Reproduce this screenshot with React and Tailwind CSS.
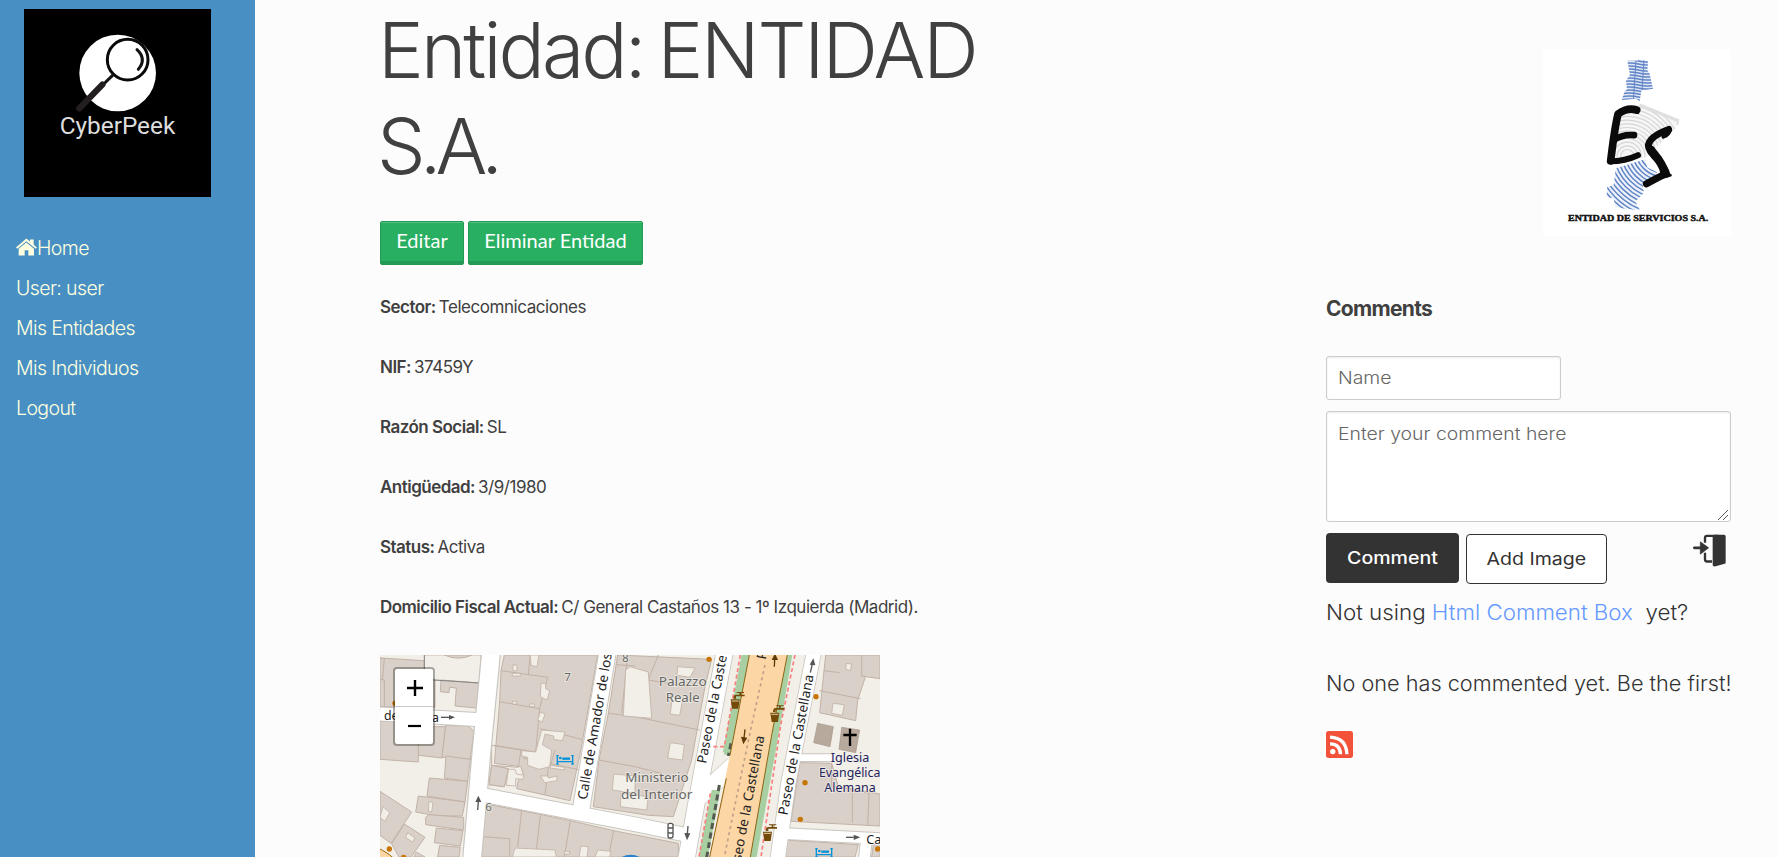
const details = [
  ["Sector:", "Telecomnicaciones"],
  ["NIF:", "37459Y"],
  ["Razón Social:", "SL"],
  ["Antigüedad:", "3/9/1980"],
  ["Status:", "Activa"],
  ["Domicilio Fiscal Actual:", "C/ General Castaños 13 - 1º Izquierda (Madrid)."],
];

function BrandLogo() {
  return (
    <svg viewBox="72 27 561 564" preserveAspectRatio="none" className="block h-[188px] w-[187px]">
      <rect x="72" y="27" width="561" height="564" fill="#000" />
      <circle cx="353" cy="219" r="115" fill="#fff" />
      <circle cx="383" cy="179" r="61" fill="#fff" stroke="#0a0809" strokeWidth="9" />
      <path d="M411 149Q441 177 415 208" fill="none" stroke="#151213" strokeWidth="9" strokeLinecap="round" />
      <path d="M340 224L305 258" stroke="#151213" strokeWidth="9" />
      <path d="M307 254L238 325" stroke="#231f20" strokeWidth="19" strokeLinecap="round" />
      <text x="179" y="402" textLength="347" lengthAdjust="spacingAndGlyphs" fontSize="73" fontFamily="Roboto, sans-serif" fontWeight="400" fill="#dedede">CyberPeek</text>
    </svg>
  );
}

function EntityLogo() {
  return (
    <svg viewBox="39 27 564 560" preserveAspectRatio="none" className="block h-[187px] w-[188px]">
      <defs>
        <clipPath id="north"><path d="M292 62H322L326 58L354 64L352 92L358 98L369 146L334 152L329 183L318 176L275 180L284 154L291 148L288 122L300 104Z" /></clipPath>
        <clipPath id="south"><path d="M258 384L345 357L352 382L381 396L378 412L338 432L341 458L316 484L330 510L256 502L251 475L229 470L232 440L251 434Z" /></clipPath>
        <clipPath id="middle"><path d="M330 190L448 238L445 256L350 350L340 354L246 362L255 215Z" /></clipPath>
      </defs>
      <rect x="39" y="27" width="564" height="560" fill="#fff" />
      <g clipPath="url(#north)">
        <rect x="270" y="50" width="110" height="140" fill="#dfe7f5" />
        <g fill="none" stroke="#6285c6" strokeWidth="4.5">
          {[60, 69, 78, 87, 96, 105, 114, 123, 132, 141, 150, 159, 168, 177].map((y) => (
            <path key={y} d={`M270 ${y + 3}Q300 ${y - 3} 325 ${y + 3}T380 ${y + 2}`} />
          ))}
          <path d="M318 60L310 182M342 60L336 150" strokeWidth="3" />
        </g>
      </g>
      <g clipPath="url(#middle)" fill="none" stroke="#d6d6d6" strokeWidth="3.5">
        <path d="M330 190L448 238L445 256L350 350L246 358L255 215Z" fill="#f6f6f6" stroke="none" />
        {[20, 31, 42, 53, 64, 75, 86, 97, 108, 119, 130, 141, 152, 163].map((r) => (
          <circle key={r} cx="292" cy="348" r={r} />
        ))}
        <path d="M330 192L448 240V254" stroke="#dfdfdf" strokeWidth="16" />
      </g>
      <g clipPath="url(#south)">
        <rect x="220" y="350" width="170" height="170" fill="#eef3fb" />
        <g fill="none" stroke="#6285c6" strokeWidth="4.5">
          {[40, 51, 62, 73, 84, 95, 106, 117, 128, 139, 150, 161, 172, 183, 194, 205, 216].map((r) => (
            <circle key={r} cx="400" cy="325" r={r} />
          ))}
        </g>
      </g>
      <g fill="none" stroke="#0b0b0b" strokeLinecap="round" strokeLinejoin="round">
        <path d="M320 210C300 203 280 210 264 222C254 262 248 314 242 362" strokeWidth="23" />
        <path d="M250 300C270 287 292 283 312 285" strokeWidth="20" />
        <path d="M241 363C268 363 300 356 324 345" strokeWidth="18" />
        <path d="M416 268C388 278 358 294 355 316C355 340 402 366 410 402C394 404 370 420 349 431" strokeWidth="21" />
        <path d="M362 328C376 348 398 366 403 396" strokeWidth="25" />
        <path d="M420 268Q418 284 400 290" strokeWidth="11" />
        <path d="M404 404L421 405" strokeWidth="9" />
      </g>
      <text x="114" y="541" textLength="421" lengthAdjust="spacingAndGlyphs" fontSize="25" fontWeight="700" fontFamily="'Liberation Serif', serif" fill="#111" stroke="#111" strokeWidth="1.2">ENTIDAD DE SERVICIOS S.A.</text>
    </svg>
  );
}

function HomeIcon() {
  return (
    <svg viewBox="50 53 63 53" className="mt-[-4px] h-[18px] w-[21px]" fill="#ffffe0">
      <path d="M81 54L92 63V57H103V73L113 81L109 85L81 62L54 85L50 81Z" />
      <path d="M81 66L104 85V105H87V89H76V105H58V85Z" />
    </svg>
  );
}

const labelHalo = { paintOrder: "stroke" };

function StreetLabel({ x, y, angle, length, children }) {
  return (
    <text transform={`translate(${x} ${y}) rotate(${angle})`} textLength={length} lengthAdjust="spacingAndGlyphs" fontSize="40" fill="#222" stroke="#fff" strokeWidth="5" style={labelHalo}>
      {children}
    </text>
  );
}

function PlaceLabel({ x, y, length, size = 39, fill = "#666", children }) {
  return (
    <text x={x} y={y} textAnchor="middle" textLength={length} lengthAdjust="spacingAndGlyphs" fontSize={size} fill={fill} stroke="#f2efe9" strokeOpacity=".8" strokeWidth="5" style={labelHalo}>
      {children}
    </text>
  );
}

function Tap({ x, y }) {
  return (
    <g transform={`translate(${x} ${y})`} fill="#734a08">
      <path d="M2 22H29L25 50H6Z" />
      <path d="M10 20Q10 8 18 8H44V13H18V20ZM28 8V3H20V0H42V3H33V8Z" />
      <path d="M5 27H26" stroke="#e0cda8" strokeWidth="3" />
    </g>
  );
}

function Bed({ x, y }) {
  return (
    <g transform={`translate(${x} ${y})`} fill="none" stroke="#0092da" strokeWidth="4">
      <path d="M3 0V28M49 0V28M0 2H7M45 2H52M0 27H7M45 27H52M3 20H49" />
      <path d="M18 11H41" strokeWidth="7" />
      <circle cx="12" cy="9" r="2" />
    </g>
  );
}

function StreetMap() {
  return (
    <svg viewBox="15 15 1500 606" preserveAspectRatio="none" className="block h-[202px] w-[500px]" fontFamily="'Noto Sans', 'Open Sans', sans-serif">
      <rect x="15" y="15" width="1500" height="606" fill="#f2efe9" />

      {/* buildings */}
      <g fill="#d9d0c9" stroke="#c2b2a6" strokeWidth="3" strokeLinejoin="round">
        <path d="M15 24L148 32V88L180 90V172L15 170Z" />
        <path d="M15 88L28 90V170M15 24L28 26L22 90" fill="none" />
        <path d="M130 230H212L201 324L130 316Z" />
        <path d="M15 213L130 218V336L15 328Z" />
        <path d="M212 227H278L297 244L286 328L201 322Z" />
        <path d="M213 318L286 328L278 394L208 384Z" />
        <path d="M163 384L278 394L270 456L156 438Z" />
        <path d="M130 438L270 456L262 498L186 498L122 486Z" />
        <path d="M162 494L266 502V540L152 524V502Z" />
        <path d="M184 534L264 542L256 588L178 578Z" />
        <path d="M194 586L256 592L252 621H188Z" />
        <path d="M15 424L110 486L48 580L15 556Z" />
        <path d="M88 522L150 562L108 621H72L50 582Z" />
        <path d="M124 606L150 621H116Z" />
        <path d="M388 15H668L616 308L585 452L425 416L430 390L446 378L438 350L358 340L374 155L378 62Z" />
        <path d="M378 62L518 82L494 176L372 155M494 176L482 306L358 286M466 15L460 72M350 286L438 300L430 352L350 346Z M350 346L400 356L388 410L342 404Z M444 324L616 360M540 300L526 350M520 352L510 434M496 236L620 268" fill="none" />
        <path d="M350 346L400 356L388 410L342 404Z" />
        <path d="M728 15L1010 28L990 110L950 330L895 500L820 496L655 470L672 330L700 190Z" />
        <path d="M724 44L780 48M700 190L780 200L974 240M672 330L780 350L860 370M758 15L740 190M850 15L820 90L940 110" fill="none" />
        <path d="M330 462L440 482L586 512L716 542L910 580V621H312Z" />
        <path d="M440 482L428 590M496 496L484 600M586 512L568 621M716 542L700 621M324 560L404 566V621" fill="none" />
        <path d="M1352 15H1460L1470 85L1448 150L1442 212L1334 188Z" />
        <path d="M1346 62L1394 68M1334 122L1456 146M1460 15V78L1515 86V15Z" />
        <path d="M1275 338L1370 340L1390 410L1515 432V528L1248 514Z" />
        <path d="M1370 340V410L1436 418L1482 430L1478 526M1432 418V518" fill="none" />
        <path d="M1230 570L1450 584L1440 621H1220Z M1495 584H1515V621H1490Z" />
      </g>
      <g fill="#b8a99d" stroke="#a59588" strokeWidth="2">
        <path d="M1328 220L1375 230L1365 290L1316 278Z" />
        <path d="M1400 232L1454 240L1442 308L1392 298Z" />
      </g>

      {/* courtyards */}
      <g fill="#f2efe9" stroke="#c2b2a6" strokeWidth="2.5">
        <path d="M466 15H492L486 50L468 46Z M414 44L426 46V62H414Z M498 100H512V116L524 122L516 150L496 140Z M496 186L510 192L502 216L488 210Z" />
        <path d="M500 240L570 246L562 272L536 268V258L510 252L502 284L530 300L524 350L492 358L458 346V322L440 318V302L482 306Z" />
        <path d="M400 358H420L424 372L448 376L442 388L422 386V408L394 406Z M496 378H520V384L546 378V392L510 398Z M526 346L568 352V360L526 354Z" />
        <path d="M148 15H318L313 99L180 90L148 88Z" />
        <path d="M412 70H436V78H412Z M412 154H426V162H412Z M464 162H478V170H464Z" />
        <path d="M24 470L44 488L30 514L15 502Z M98 548L120 564L112 576L92 562Z M162 454L174 458L170 486L160 484Z" />
        <path d="M716 372L780 378V430L712 420Z" />
        <path d="M765 50L820 66L830 205L745 198L752 60Z" />
        <path d="M886 278L928 284L922 330L878 324Z M892 140L924 144L914 196L886 192Z M908 50L960 54L945 82L906 76Z" />
        <path d="M738 430L820 440L815 480L736 470Z M420 594L540 600L544 621H412Z M618 588L640 590L636 621H612Z M668 600L708 604L704 621H660Z M568 604H584V612H568Z" />
        <path d="M1374 160L1408 164L1402 196L1370 190Z M1414 40L1430 42L1426 62L1412 58Z" />
      </g>
      <g fill="#d9d0c9" stroke="#c2b2a6" strokeWidth="3">
        <path d="M198 90L313 99L305 174L240 168L244 114L224 112L222 128L196 125Z" />
        <path d="M208 15Q250 34 292 15Z" />
      </g>
      <path d="M148 15V88L313 99" fill="none" stroke="#777" strokeWidth="2.5" />

      {/* street casings, then carriageways */}
      <g fill="none" stroke="#c9c5bf" strokeLinejoin="round">
        <path d="M15 192L330 210" strokeWidth="45" />
        <path d="M349 0L320 300L290 640" strokeWidth="60" />
        <path d="M310 432L620 492L780 523L940 556" strokeWidth="47" />
        <path d="M699 0L616 490" strokeWidth="55" />
        <path d="M1050 0L966 450L932 640" strokeWidth="54" />
        <path d="M962 450L1076 345" strokeWidth="54" />
        <path d="M1318 0L1240 400L1206 640" strokeWidth="48" />
        <path d="M1260 323H1380" strokeWidth="26" />
        <path d="M1220 550L1515 566M1475 566L1466 640" strokeWidth="38" />
      </g>
      <g fill="none" stroke="#fff" strokeLinejoin="round">
        <path d="M15 192L330 210" strokeWidth="39" />
        <path d="M349 0L320 300L290 640" strokeWidth="53" />
        <path d="M310 432L620 492L780 523L940 556" strokeWidth="41" />
        <path d="M699 0L616 490" strokeWidth="49" />
        <path d="M1050 0L966 450L932 640" strokeWidth="49" />
        <path d="M962 450L1076 345" strokeWidth="50" />
        <path d="M1318 0L1240 400L1206 640" strokeWidth="43" />
        <path d="M1260 323H1380" strokeWidth="20" />
        <path d="M1220 550L1515 566M1475 566L1466 640" strokeWidth="32" />
      </g>

      {/* avenue with planted strips */}
      <g fill="#a8cfa2">
        <path d="M1100 15H1130L1068 310L1050 316L1044 304Z" />
        <path d="M1010 420H1036L998 621H971Z" />
        <path d="M1228 15H1252L1216 225L1145 621H1115Z" />
      </g>
      <path d="M1033 405L992 640M1068 280L1060 318" fill="none" stroke="#555a50" strokeWidth="9" strokeDasharray="18 11" />
      <path d="M1123 15H1237L1191 250L1126 621H1004L1064 320Z" fill="#fcd6a4" />
      <path d="M1123 15L1065 316M1054 385L1004 621M1237 15L1191 250L1126 621" fill="none" stroke="#8c6414" strokeWidth="3" />
      <path d="M1170 45L1130 225L1085 440L1048 621" fill="none" stroke="#c0a08c" strokeWidth="5" strokeDasharray="9 10" />
      <path d="M1096 15L1048 290H1005M1006 430L972 621M1260 15L1217 225L1158 621" fill="none" stroke="#f97f7d" strokeWidth="5" strokeDasharray="12 8" />

      {/* south-west main road */}
      <path d="M0 590Q50 612 70 640H0Z" fill="#fcd6a4" stroke="#a06b00" strokeWidth="3" />

      {/* one-way arrows */}
      <g fill="#555" stroke="#555" strokeWidth="4">
        <path d="M198 202H222" /><path d="M222 195L240 202L222 209Z" stroke="none" />
        <path d="M308 480L310 455" /><path d="M301 456L310 437L319 456Z" stroke="none" />
        <path d="M1306 68L1312 42" /><path d="M1304 44L1315 25L1321 46Z" stroke="none" />
        <path d="M939 528L937 552" /><path d="M928 549L936 571L946 550Z" stroke="none" />
        <path d="M1413 562H1436" /><path d="M1436 554L1456 562L1436 570Z" stroke="none" />
      </g>
      <g fill="#5d3b08" stroke="#5d3b08" strokeWidth="4">
        <path d="M1110 238L1107 264" /><path d="M1098 260L1105 283L1117 263Z" stroke="none" />
        <path d="M1198 50L1199 30" /><path d="M1190 30L1200 10L1209 30Z" stroke="none" />
      </g>

      <text x="27" y="209" fontSize="37" fill="#222">de</text>
      <text x="171" y="215" fontSize="37" fill="#222">a</text>
      <StreetLabel x={635} y={451} angle={-80.2} length={446}>Calle de Amador de los</StreetLabel>
      <StreetLabel x={993} y={342} angle={-79} length={330}>Paseo de la Caste</StreetLabel>
      <StreetLabel x={1237} y={497} angle={-79.4} length={428}>Paseo de la Castellana</StreetLabel>
      <text transform="translate(1089 682) rotate(-79.4)" textLength="430" lengthAdjust="spacingAndGlyphs" fontSize="40" fill="#222">Paseo de la Castellana</text>
      <text transform="translate(1172 30) rotate(-79)" fontSize="40" fill="#222">Pa</text>
      <PlaceLabel x={578} y={92} size={35}>7</PlaceLabel>
      <PlaceLabel x={751} y={35} size={35}>8</PlaceLabel>
      <PlaceLabel x={341} y={484} size={35}>6</PlaceLabel>
      <PlaceLabel x={923} y={108} length={144}>Palazzo</PlaceLabel>
      <PlaceLabel x={923} y={157} length={102}>Reale</PlaceLabel>
      <PlaceLabel x={846} y={397} length={190}>Ministerio</PlaceLabel>
      <PlaceLabel x={845} y={446} length={214}>del Interior</PlaceLabel>
      <PlaceLabel x={1425} y={337} length={116} fill="#22225c">Iglesia</PlaceLabel>
      <PlaceLabel x={1424} y={381} length={184} fill="#22225c">Evangélica</PlaceLabel>
      <PlaceLabel x={1425} y={426} length={154} fill="#22225c">Alemana</PlaceLabel>
      <text x="1474" y="583" fontSize="38" fill="#222" stroke="#fff" strokeWidth="5" style={labelHalo}>Ca</text>

      <path d="M1425 236V288M1405 255H1445" stroke="#000" strokeWidth="7" />
      <Bed x={544} y={315} />
      <Bed x={1321} y={594} />
      <Tap x={1065} y={126} />
      <Tap x={1184} y={166} />
      <Tap x={1162} y={523} />
      <g fill="#fff" stroke="#555" strokeWidth="4">
        <rect x="879" y="520" width="15" height="44" rx="6" />
        <path d="M879 534H894M879 549H894" />
      </g>
      <g fill="#c77400">
        <circle cx="60" cy="160" r="8" /><circle cx="43" cy="597" r="8" /><circle cx="86" cy="622" r="8" />
        <circle cx="1002" cy="28" r="8" /><circle cx="1323" cy="140" r="8" /><circle cx="1290" cy="398" r="8" />
        <circle cx="1276" cy="508" r="8" /><circle cx="1508" cy="597" r="8" />
      </g>
      <path d="M740 621Q767 608 794 621Z" fill="#2a81cb" />
    </svg>
  );
}

function LoginIcon() {
  return (
    <svg viewBox="1149 42 99 98" className="mr-[5px] mt-[-1px] h-[33px] w-[33px]">
      <path d="M1208 47L1214 44H1242Q1247 44 1247 49V128Q1247 130 1244 131L1214 139Q1208 139 1208 134Z" fill="#333" />
      <path d="M1226 47H1191Q1185 47 1185 53V68M1185 98V118Q1185 124 1191 124H1206" fill="none" stroke="#333" strokeWidth="7" />
      <path d="M1153 83H1176" stroke="#333" strokeWidth="8" strokeLinecap="round" />
      <path d="M1171 65L1196 83L1171 102Z" fill="#333" stroke="#333" strokeWidth="2" />
    </svg>
  );
}

function RssIcon() {
  return (
    <svg viewBox="0 0 80 80" className="block h-[27px] w-[27px]">
      <rect width="80" height="80" rx="8" fill="#f25239" />
      <circle cx="20" cy="61" r="8" fill="#fff" />
      <path d="M12 38Q42 38 43 69M12 18Q60 20 62 69" fill="none" stroke="#fff" strokeWidth="10" />
    </svg>
  );
}

const greenButton =
  "h-[44px] rounded-[2px] border border-[#239a55] bg-[#29af61] pb-[7px] text-[20px] text-white shadow-[inset_0_1px_0_rgba(255,255,255,0.2),inset_0_-3px_0_#249a56]";

export default function App() {
  return (
    <div className="flex h-[857px] overflow-hidden bg-[#fcfcfc] font-[Inter,sans-serif] text-[#404040]">
      <aside className="w-[255px] shrink-0 bg-[#4890c3] pt-[9px]">
        <div className="ml-6">
          <BrandLogo />
        </div>
        <nav className="mt-[32px] flex flex-col pl-4 text-[19.5px] font-light tracking-[-0.6px] text-[#ffffe0]">
          <a className="flex h-10 items-center"><HomeIcon />Home</a>
          <a className="flex h-10 items-center">User: user</a>
          <a className="flex h-10 items-center">Mis Entidades</a>
          <a className="flex h-10 items-center">Mis Individuos</a>
          <a className="flex h-10 items-center">Logout</a>
        </nav>
      </aside>

      <main className="flex grow justify-between pl-[125px] pr-[47px]">
        <section className="w-[640px]">
          <h1 className="ml-[-2px] mt-[2px] text-[77px] font-light leading-[96px]">
            <span className="block tracking-[-2.1px]"><span className="tracking-[-2.9px] [word-spacing:-5px]">Entidad: </span>ENTIDAD</span>
            <span className="ml-[-1px] block tracking-[-6px]">S.A.</span>
          </h1>
          <div className="mt-[27px] flex gap-1 font-[Lato,sans-serif]">
            <button className={`${greenButton} w-[84px]`}>Editar</button>
            <button className={`${greenButton} w-[175px]`}>Eliminar Entidad</button>
          </div>
          <dl className="mt-[13px] text-[17px] tracking-[-0.45px]">
            {details.map(([label, value]) => (
              <div key={label} className="flex h-[60px] items-center gap-[3px]">
                <dt className="font-semibold tracking-[-0.52px]">{label}</dt>
                <dd>{value}</dd>
              </div>
            ))}
          </dl>
          <div className="relative mt-[17px] w-[500px]">
            <StreetMap />
            <div className="absolute left-[13px] top-[12px] flex w-[42px] flex-col rounded-[4px] border-2 border-black/30 bg-white bg-clip-padding">
              <button className="flex h-[38px] items-center justify-center border-b border-[#ccc] pl-[2px] pt-px">
                <svg viewBox="0 0 16 16" className="h-4 w-4"><path d="M8 0V16M0 8H16" stroke="#000" strokeWidth="2.4" /></svg>
              </button>
              <button className="flex h-[37px] items-center justify-center">
                <svg viewBox="0 0 14 14" className="h-3.5 w-3.5"><path d="M1 7H14" stroke="#000" strokeWidth="2.2" /></svg>
              </button>
            </div>
          </div>
        </section>

        <section className="flex w-[405px] flex-col pt-[49px]">
          <div className="self-end">
            <EntityLogo />
          </div>
          <h2 className="mt-[57px] text-[21px] font-bold leading-8 tracking-[-0.7px]">Comments</h2>
          <div className="mt-[31px] flex h-[44px] w-[235px] items-center rounded-[3px] border border-[#ccc] bg-white pl-[11px] pt-[2px] text-[17px] font-light text-[#666] shadow-[inset_0_1px_2px_rgba(0,0,0,0.08)]">
            <span className="inline-block origin-left scale-x-[1.14]">Name</span>
          </div>
          <div className="relative mt-[11px] h-[111px] shrink-0 rounded-[3px] border border-[#ccc] bg-white pl-[11px] pt-[10px] text-[17px] font-light text-[#666] shadow-[inset_0_1px_2px_rgba(0,0,0,0.08)]">
            <span className="inline-block origin-left scale-x-[1.14]">Enter your comment here</span>
            <svg viewBox="0 0 10 10" className="absolute bottom-[1px] right-[2px] h-[10px] w-[10px]">
              <path d="M0 10L10 0M5 10L10 5" stroke="#555" strokeWidth="1" />
            </svg>
          </div>
          <div className="mt-[11px] flex text-[17px]">
            <button className="h-[50px] w-[133px] rounded-[4px] bg-[#333] pt-px font-medium text-white">
              <span className="inline-block scale-x-[1.15]">Comment</span>
            </button>
            <button className="ml-[7px] mt-px h-[50px] w-[141px] rounded-[4px] border border-[#333] bg-white pt-px text-[#333]">
              <span className="inline-block scale-x-[1.15]">Add Image</span>
            </button>
            <div className="ml-auto mt-[2px]">
              <LoginIcon />
            </div>
          </div>
          <p className="mt-[13px] origin-left scale-x-[1.063] whitespace-pre text-[21px] font-light leading-8 text-[#333]">
            Not using <a className="text-[#6699ff]">Html Comment Box</a>{"  "}yet?
          </p>
          <p className="mt-[39px] origin-left scale-x-[1.033] whitespace-nowrap text-[21px] font-light leading-8 text-[#333]">
            No one has commented yet. Be the first!
          </p>
          <div className="mt-[31px]">
            <RssIcon />
          </div>
        </section>
      </main>
    </div>
  );
}
